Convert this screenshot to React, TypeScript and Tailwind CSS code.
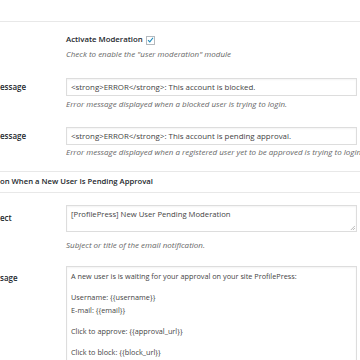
const Help = ({ children }: { children: React.ReactNode }) => (
  <p className="h-[12px] whitespace-nowrap text-[8px] leading-[12px] italic text-[#666]">
    {children}
  </p>
);

const Label = ({ children }: { children: React.ReactNode }) => (
  <div className="w-[66px] shrink-0 whitespace-nowrap text-[8px] leading-[18px] font-semibold text-[#23282d]">
    {children}
  </div>
);

const App = () => {
  return (
    <main className="h-[360px] w-[360px] overflow-hidden bg-white font-['Open_Sans',sans-serif] text-[#23282d]">
      <div className="h-[22px] border-b border-[#e8e8e8]" />

      <section className="flex pt-[12px]">
        <Label>{""}</Label>
        <div>
          <label className="flex h-[12px] items-center gap-[3px] text-[7.8px] font-semibold">
            Activate Moderation
            <span className="flex h-[9px] w-[9px] items-center justify-center border border-[#b4b9be] bg-white">
              <svg viewBox="0 0 10 10" className="h-[8px] w-[8px]">
                <path d="M1.5 5.2 L4 7.6 L8.6 1.8" fill="none" stroke="#1e8cbe" strokeWidth="1.6" />
              </svg>
            </span>
          </label>
          <div className="mt-[2px]">
            <Help>Check to enable the "user moderation" module</Help>
          </div>
        </div>
      </section>

      <section className="mt-[18px] flex">
        <Label>essage</Label>
        <div className="w-[291px]">
          <div className="h-[18px] border border-[#ddd] pl-[4px] text-[7.9px] leading-[16px] whitespace-nowrap text-[#444] shadow-[inset_0_1px_2px_rgba(0,0,0,0.05)]">
            &lt;strong&gt;ERROR&lt;/strong&gt;: This account is blocked.
          </div>
          <div className="mt-[2px]">
            <Help>Error message displayed when a blocked user is trying to login.</Help>
          </div>
        </div>
      </section>

      <section className="mt-[17px] flex">
        <Label>essage</Label>
        <div className="w-[291px]">
          <div className="h-[18px] border border-[#ddd] pl-[4px] text-[7.9px] leading-[16px] whitespace-nowrap text-[#444] shadow-[inset_0_1px_2px_rgba(0,0,0,0.05)]">
            &lt;strong&gt;ERROR&lt;/strong&gt;: This account is pending approval.
          </div>
          <div className="mt-[1px]">
            <Help>
              Error message displayed when a registered user yet to be approved is trying to login.
            </Help>
          </div>
        </div>
      </section>

      <div className="mt-[13px] flex h-[22px] items-center border-y border-[#e8e8e8] text-[7.7px] font-semibold whitespace-nowrap">
        on When a New User Is Pending Approval
      </div>

      <section className="mt-[12px] flex">
        <div className="pt-[4px]">
          <Label>ect</Label>
        </div>
        <div className="w-[291px]">
          <div className="relative h-[27px] border border-[#ddd] pl-[4px] pt-[2px] text-[7.7px] leading-[12px] text-[#444] shadow-[inset_0_1px_2px_rgba(0,0,0,0.05)]">
            [ProfilePress] New User Pending Moderation
            <svg viewBox="0 0 6 6" className="absolute right-[1px] bottom-[1px] h-[5px] w-[5px]">
              <path d="M6 1 L1 6 M6 3.5 L3.5 6" stroke="#999" strokeWidth="0.8" />
            </svg>
          </div>
          <div className="mt-[7px]">
            <Help>Subject or title of the email notification.</Help>
          </div>
        </div>
      </section>

      <section className="mt-[15px] flex">
        <div className="pt-[3px]">
          <Label>sage</Label>
        </div>
        <div className="h-[120px] w-[291px] border border-[#ddd] pl-[4px] pt-[3px] text-[7.3px] leading-[13px] text-[#444] shadow-[inset_0_1px_2px_rgba(0,0,0,0.05)]">
          <p>A new user is is waiting for your approval on your site ProfilePress:</p>
          <p className="h-[8px]" />
          <p>Username: {"{{username}}"}</p>
          <p>E-mail: {"{{email}}"}</p>
          <p className="h-[8px]" />
          <p>Click to approve: {"{{approval_url}}"}</p>
          <p className="h-[8px]" />
          <p>Click to block: {"{{block_url}}"}</p>
        </div>
      </section>
    </main>
  );
};

export default App;
